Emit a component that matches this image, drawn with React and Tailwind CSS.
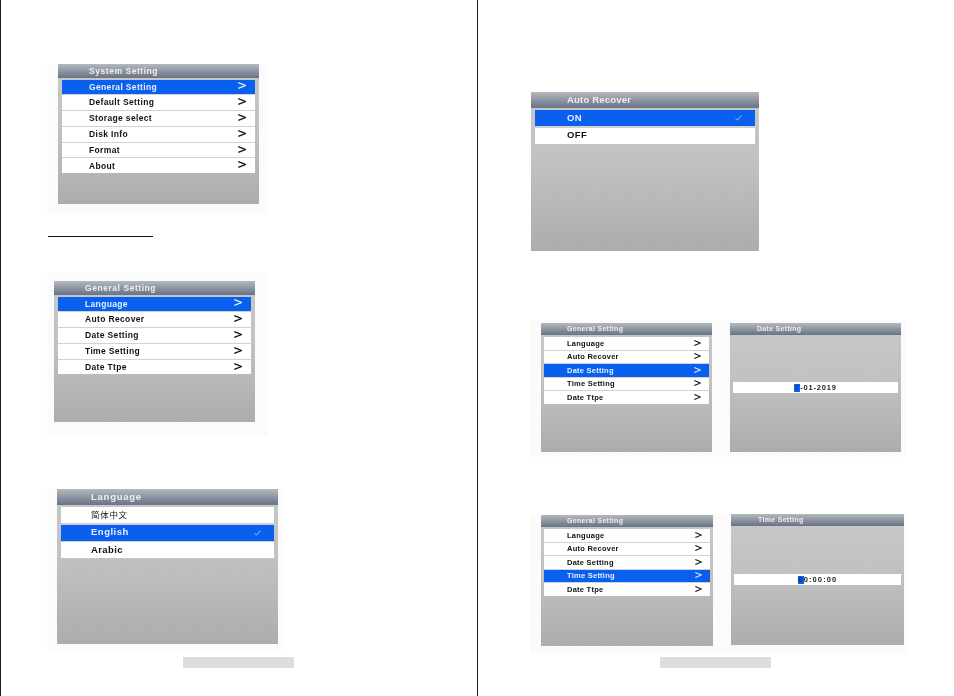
const metal =
  "bg-[repeating-linear-gradient(90deg,rgba(255,255,255,0.03)_0px,rgba(0,0,0,0.025)_1px,rgba(255,255,255,0.02)_2px,rgba(0,0,0,0.012)_4px,rgba(255,255,255,0.025)_5px,rgba(0,0,0,0.02)_7px,rgba(255,255,255,0.03)_9px),linear-gradient(180deg,#c9c9c9_0%,#c2c2c2_45%,#adadad_100%)]"

const mainMenu = ["Language", "Auto Recover", "Date Setting", "Time Setting", "Date Ttpe"]
const systemMenu = ["General Setting", "Default Setting", "Storage select", "Disk Info", "Format", "About"]

function Chevron({ className }) {
  return (
    <svg viewBox="0 0 8 7" className={className} fill="none" stroke="currentColor" strokeWidth="1.3">
      <polyline points="0.3,0.7 7.4,3.5 0.3,6.3" />
    </svg>
  )
}

function Check() {
  return (
    <svg viewBox="0 0 7 6" className="h-[6px] w-[7px] text-[#dbe7ff]" fill="none" stroke="currentColor" strokeWidth="0.7">
      <polyline points="0.5,3.2 2.4,5.2 6.5,0.5" />
    </svg>
  )
}

// big menu, used for the two settings lists on the left page
function Menu({ title, items, active }) {
  return (
    <div className={`flex h-full flex-col blur-[0.5px] ${metal}`}>
      <div className="flex h-[14px] shrink-0 items-center bg-linear-to-b from-[#b5b9be] to-[#687387] pl-[31px] text-[8.5px] font-bold tracking-[0.55px] text-[#eeeeee]">
        {title}
      </div>
      <div className="mx-[4px] mt-[1.5px] flex flex-col gap-px bg-[#d2d2d2]">
        {items.map((item) => (
          <div
            key={item}
            className={`flex h-[14.8px] items-center justify-between pl-[27px] pr-[9px] text-[8.5px] font-bold tracking-[0.35px] ${item === active ? "bg-[#0a60ee] text-[#e6efff]" : "bg-white text-[#111111]"}`}
          >
            <span>{item}</span>
            <Chevron className="mb-[2px] h-[7px] w-[8px]" />
          </div>
        ))}
      </div>
    </div>
  )
}

// wide lists with a tick (Language, Auto Recover)
function Picker({ title, titleClass, children }) {
  return (
    <div className={`flex h-full flex-col blur-[0.5px] ${metal}`}>
      <div className={`flex h-[16px] shrink-0 items-center bg-linear-to-b from-[#b5b9be] to-[#687387] text-[9.5px] font-bold text-[#eeeeee] ${titleClass}`}>
        {title}
      </div>
      <div className="mx-[4px] mt-[2px] flex flex-col gap-[1.5px] bg-[#d2d2d2]">{children}</div>
    </div>
  )
}

function PickerRow({ active, className, children }) {
  return (
    <div className={`flex h-[16px] items-center justify-between pr-[13px] ${active ? "bg-[#0a60ee] text-[#e6efff]" : "bg-white text-[#111111]"} ${className}`}>
      <span>{children}</span>
      {active && <Check />}
    </div>
  )
}

// small menu, the left half of the date and time pairs
function SmallMenu({ active }) {
  return (
    <div className={`flex h-full flex-col blur-[0.5px] ${metal}`}>
      <div className="flex h-[12px] shrink-0 items-center bg-linear-to-b from-[#b5b9be] to-[#687387] pl-[26px] text-[7px] font-bold tracking-[0.3px] text-[#eeeeee]">
        General Setting
      </div>
      <div className="mx-[3px] mt-[2px] flex flex-col gap-px bg-[#d2d2d2]">
        {mainMenu.map((item) => (
          <div
            key={item}
            className={`flex h-[12.5px] items-center justify-between pl-[23px] pr-[8px] text-[7.5px] font-bold tracking-[0.25px] ${item === active ? "bg-[#0a60ee] text-[#e6efff]" : "bg-white text-[#111111]"}`}
          >
            <span>{item}</span>
            <Chevron className="mb-[1px] h-[6px] w-[7px]" />
          </div>
        ))}
      </div>
    </div>
  )
}

function ValueScreen({ title, selected, rest, barClass, selectedClass }) {
  return (
    <div className={`flex h-full flex-col blur-[0.5px] ${metal}`}>
      <div className="flex h-[12px] shrink-0 items-center bg-linear-to-b from-[#b5b9be] to-[#687387] pl-[27px] text-[7px] font-bold tracking-[0.3px] text-[#eeeeee]">
        {title}
      </div>
      <div className={`mx-[3px] flex h-[11px] items-center justify-center bg-white text-[7.5px] font-bold text-[#222222] ${barClass}`}>
        <span className={`flex h-[8px] w-[6px] items-center justify-center ${selectedClass}`}>{selected}</span>
        <span>{rest}</span>
      </div>
    </div>
  )
}

export default function App() {
  return (
    <div className="flex h-[696px] w-[954px] overflow-hidden bg-white font-['Liberation_Sans','Noto_Sans_CJK_SC',sans-serif]">
      {/* Left page */}
      <div className="flex h-full w-[478px] shrink-0 flex-col border-x border-[#1a1a1a]">
        <div className="ml-[46px] mt-[64px] h-[150px] w-[221px] bg-[#fbfbfb] pl-[11px] pr-[9px] pb-[10px]">
          <Menu title="System Setting" items={systemMenu} active="General Setting" />
        </div>

        <div className="ml-[47px] mt-[22px] h-px w-[105px] bg-[#111111]" />

        <div className="ml-[46px] mt-[36px] h-[163px] w-[221px] bg-[#fbfbfb] pl-[7px] pr-[13px] pt-[8px] pb-[14px]">
          <Menu title="General Setting" items={mainMenu} active="Language" />
        </div>

        <div className="ml-[46px] mt-[53px] h-[161px] w-[237px] bg-[#fbfbfb] pl-[10px] pr-[6px] pb-[6px]">
          <Picker title="Language" titleClass="pl-[34px] tracking-[0.75px]">
            <PickerRow className="pl-[30px] text-[8.5px] tracking-[0.7px]">简体中文</PickerRow>
            <PickerRow className="pl-[30px] text-[9.5px] font-bold tracking-[0.5px]" active>English</PickerRow>
            <PickerRow className="pl-[30px] text-[9.5px] font-bold tracking-[0.4px]">Arabic</PickerRow>
          </Picker>
        </div>

        <div className="ml-[182px] mt-[7px] h-[11px] w-[111px] bg-[#dddddd]" />
      </div>

      {/* Right page */}
      <div className="flex h-full flex-1 flex-col">
        <div className="ml-[53px] mt-[92px] h-[159px] w-[228px]">
          <Picker title="Auto Recover" titleClass="pl-[36px] tracking-[0.2px]">
            <PickerRow className="pl-[32px] text-[9.5px] font-bold tracking-[0.4px]" active>ON</PickerRow>
            <PickerRow className="pl-[32px] text-[9.5px] font-bold tracking-[0.4px]">OFF</PickerRow>
          </Picker>
        </div>

        <div className="ml-[52px] mt-[69px] flex h-[137px] w-[376px] gap-[18px] bg-[#fbfbfb] pl-[11px] pr-[4px] pt-[3px] pb-[5px]">
          <div className="h-full w-[171px]">
            <SmallMenu active="Date Setting" />
          </div>
          <div className="h-full w-[171px]">
            <ValueScreen title="Date Setting" selected="7" rest="-01-2019" barClass="mt-[47px] tracking-[0.8px]" selectedClass="bg-[#0a60ee] text-[#123a8a]" />
          </div>
        </div>

        <div className="ml-[52px] mt-[57px] flex h-[140px] w-[378px] gap-[18px] bg-[#fbfbfb] pl-[11px] pr-[4px]">
          <div className="mt-[1px] h-[131px] w-[172px]">
            <SmallMenu active="Time Setting" />
          </div>
          <div className="h-[131px] w-[173px]">
            <ValueScreen title="Time Setting" selected="0" rest="0:00:00" barClass="mt-[48px] tracking-[1.1px]" selectedClass="bg-[#0a60ee] text-[#0d2a6a]" />
          </div>
        </div>

        <div className="ml-[182px] mt-[3px] h-[11px] w-[111px] bg-[#dddddd]" />
      </div>
    </div>
  )
}
